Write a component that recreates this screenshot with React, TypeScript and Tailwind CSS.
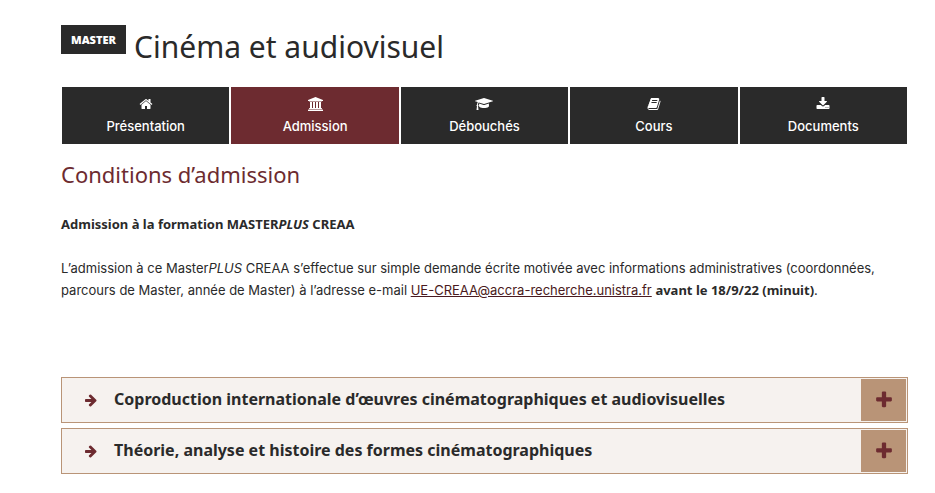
import type { ReactNode } from 'react';

type IconProps = { box: string; d: string; className: string };

const Icon = ({ box, d, className }: IconProps) => (
  <svg viewBox={box} className={className} fill="currentColor" aria-hidden="true">
    <path d={d} />
  </svg>
);

const tabs = [
  {
    label: 'Présentation',
    box: '0 0 1792 1792',
    d: 'M1472 992v480q0 26-19 45t-45 19h-384v-384h-256v384h-384q-26 0-45-19t-19-45v-480q0-1 .5-3t.5-3l575-474 575 474q1 2 1 6zm223-69l-62 74q-8 9-21 11h-3q-13 0-21-7l-692-577-692 577q-12 8-24 7-13-2-21-11l-62-74q-8-10-7-23.5t11-21.5l719-599q32-26 76-26t76 26l244 204v-195q0-14 9-23t23-9h192q14 0 23 9t9 23v408l219 182q10 8 11 21.5t-7 23.5z',
  },
  {
    label: 'Admission',
    active: true,
    box: '0 0 1920 1792',
    d: 'M960 0l960 384v128h-128q0 26-20.5 45t-48.5 19h-1526q-28 0-48.5-19t-20.5-45h-128v-128zm-704 640h256v768h128v-768h256v768h128v-768h256v768h128v-768h256v768h59q28 0 48.5 19t20.5 45v64h-1664v-64q0-26 20.5-45t48.5-19h59v-768zm1595 960q28 0 48.5 19t20.5 45v128h-1920v-128q0-26 20.5-45t48.5-19h1782z',
  },
  {
    label: 'Débouchés',
    box: '0 0 2304 1792',
    d: 'M1774 836l18 316q4 69-82 128t-235 93.5-323 34.5-323-34.5-235-93.5-82-128l18-316 574 181q22 7 48 7t48-7zm530-324q0 23-22 31l-1120 352q-4 1-10 1t-10-1l-652-206q-43 34-71 111.5t-34 178.5q63 36 63 109 0 69-58 107l58 433q2 14-8 25-9 11-24 11h-192q-15 0-24-11-10-11-8-25l58-433q-58-38-58-107 0-73 65-111 11-207 98-330l-333-104q-22-8-22-31t22-31l1120-352q4-1 10-1t10 1l1120 352q22 8 22 31z',
  },
  {
    label: 'Cours',
    box: '0 0 1792 1792',
    d: 'M1703 478q40 57 18 129l-275 906q-19 64-76.5 107.5t-122.5 43.5h-923q-77 0-148.5-53.5t-99.5-131.5q-24-67-2-127 0-4 3-27t4-37q1-8-3-21.5t-3-19.5q2-11 8-21t16.5-23.5 16.5-23.5q23-38 45-91.5t30-91.5q3-10 .5-30t-.5-28q3-11 17-28t17-23q21-36 42-92t25-90q1-9-2.5-32t.5-28q4-13 22-30.5t22-22.5q19-26 42.5-84.5t27.5-96.5q1-8-3-25.5t-2-26.5q2-8 9-18t18-23 17-21q8-12 16.5-30.5t15-35 16-36 19.5-32 26.5-23.5 36-11.5 47.5 5.5l-1 3q38-9 51-9h761q74 0 114 56t18 130l-274 906q-36 119-71.5 153.5t-128.5 34.5h-869q-27 0-38 15-11 16-1 43 24 70 144 70h923q29 0 56-15.5t35-41.5l300-987q7-22 5-57 38 15 59 43zm-1064 2q-4 13 2 22.5t20 9.5h608q13 0 25.5-9.5t16.5-22.5l21-64q4-13-2-22.5t-20-9.5h-608q-13 0-25.5 9.5t-16.5 22.5zm-83 256q-4 13 2 22.5t20 9.5h608q13 0 25.5-9.5t16.5-22.5l21-64q4-13-2-22.5t-20-9.5h-608q-13 0-25.5 9.5t-16.5 22.5z',
  },
  {
    label: 'Documents',
    box: '0 0 1792 1792',
    d: 'M1344 1344q0-26-19-45t-45-19-45 19-19 45 19 45 45 19 45-19 19-45zm256 0q0-26-19-45t-45-19-45 19-19 45 19 45 45 19 45-19 19-45zm128-224v320q0 40-28 68t-68 28h-1472q-40 0-68-28t-28-68v-320q0-40 28-68t68-28h465l135 136q58 56 136 56t136-56l136-136h464q40 0 68 28t28 68zm-325-569q17 41-14 70l-448 448q-18 19-45 19t-45-19l-448-448q-31-29-14-70 17-39 59-39h256v-448q0-26 19-45t45-19h256q26 0 45 19t19 45v448h256q42 0 59 39z',
  },
];

const arrowPath =
  'M1600 960q0 54-37 91l-651 651q-39 37-91 37-51 0-90-37l-75-75q-38-38-38-91t38-91l293-293h-704q-52 0-84.5-37.5t-32.5-90.5v-128q0-53 32.5-90.5t84.5-37.5h704l-293-294q-38-36-38-90t38-90l75-75q38-38 90-38 53 0 91 38l651 651q37 35 37 90z';
const plusPath =
  'M1600 736v192q0 40-28 68t-68 28h-416v416q0 40-28 68t-68 28h-192q-40 0-68-28t-28-68v-416h-416q-40 0-68-28t-28-68v-192q0-40 28-68t68-28h416v-416q0-40 28-68t68-28h192q40 0 68 28t28 68v416h416q40 0 68 28t28 68z';

const AccordionRow = ({ children }: { children: ReactNode }) => (
  <button
    type="button"
    aria-expanded="false"
    className="flex w-full items-stretch border border-[#b99477] bg-[#f6f2ef] p-px text-left"
  >
    <span className="flex flex-1 items-center gap-4 pb-0.5 pl-[21px]">
      <Icon box="0 0 1792 1792" d={arrowPath} className="mt-0.5 size-3.5 text-[#6d2b30]" />
      <span className="text-base leading-6 font-bold">{children}</span>
    </span>
    <span className="flex h-[42px] w-[45px] items-center justify-center bg-[#b99477]">
      <Icon box="0 0 1792 1792" d={plusPath} className="size-5 text-[#6d2b30]" />
    </span>
  </button>
);

export default function App() {
  return (
    <main className="bg-white pt-[25px] pr-[27px] pb-5 pl-[61px] font-['Noto_Sans',sans-serif] text-[#2a2a2a]">
      <header className="flex items-start gap-2">
        <span className="bg-[#2a2a2a] px-2.5 text-[11px] leading-[29px] font-black text-white">
          MASTER
        </span>
        <h1 className="text-[30px] leading-[44px]">Cinéma et audiovisuel</h1>
      </header>

      <nav className="mt-[18px] grid grid-cols-5 gap-0.5 px-px">
        {tabs.map((tab) => (
          <a
            key={tab.label}
            href="#"
            aria-current={tab.active ? 'page' : undefined}
            className={`flex h-[57px] flex-col items-center gap-[5px] pt-2.5 font-['Inter',sans-serif] text-[13px] leading-5 font-medium text-white ${
              tab.active ? 'bg-[#6d2b30]' : 'bg-[#2a2a2a]'
            }`}
          >
            <Icon box={tab.box} d={tab.d} className="h-3.5 w-auto" />
            {tab.label}
          </a>
        ))}
      </nav>

      <h2 className="mt-[15px] text-[22px] leading-[30px] text-[#6d2b30]">
        Conditions d’admission
      </h2>

      <div className="mt-6 text-[13px] leading-[22px]">
        <p className="font-bold">
          Admission à la formation MASTER<em>PLUS</em> CREAA
        </p>
        <p className="mt-[22px] font-['Inter',sans-serif]">
          L’admission à ce Master<em>PLUS</em> CREAA s’effectue sur simple demande écrite motivée avec
          informations administratives (coordonnées, parcours de Master, année de Master) à l’adresse
          e-mail{' '}
          <a href="mailto:UE-CREAA@accra-recherche.unistra.fr" className="text-[#4a1a20] underline">
            UE-CREAA@accra-recherche.unistra.fr
          </a>{' '}
          <strong className="font-['Noto_Sans',sans-serif]">avant le 18/9/22 (minuit)</strong>.
        </p>
      </div>

      <section className="mt-[76px] flex flex-col gap-[5px]">
        <AccordionRow>
          Coproduction internationale d’œuvres cinématographiques et audiovisuelles
        </AccordionRow>
        <AccordionRow>Théorie, analyse et histoire des formes cinématographiques</AccordionRow>
      </section>
    </main>
  );
}
